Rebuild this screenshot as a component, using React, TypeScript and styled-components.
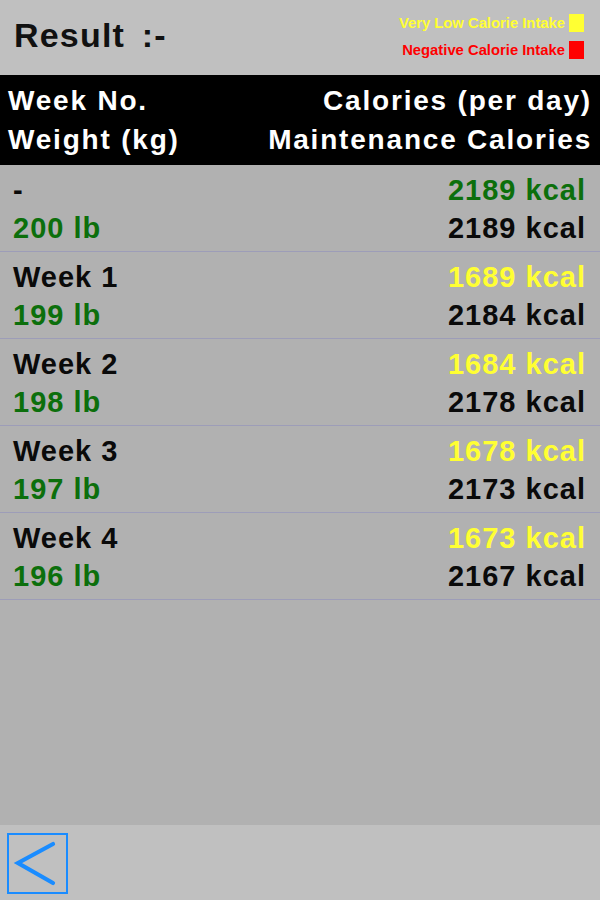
import React from "react";
import styled, { createGlobalStyle } from "styled-components";

const GlobalStyle = createGlobalStyle`
  html, body {
    margin: 0;
    padding: 0;
    height: 100%;
  }
  #root {
    height: 100%;
  }
  body {
    font-family: "Liberation Sans", Arial, Helvetica, sans-serif;
  }
`;

const Screen = styled.div`
  display: flex;
  flex-direction: column;
  width: 600px;
  height: 900px;
  background: #b1b1b1;
`;

const TopBar = styled.header`
  display: flex;
  align-items: center;
  justify-content: space-between;
  height: 75px;
  padding: 0 16px 0 14px;
  box-sizing: border-box;
  background: #c0c0c0;
`;

const Title = styled.h1`
  margin: 0;
  font-size: 34px;
  font-weight: bold;
  color: #111;
  letter-spacing: 1.2px;
  word-spacing: 6px;
  padding-bottom: 4px;
`;

const Legend = styled.div`
  display: flex;
  flex-direction: column;
  align-items: flex-end;
  gap: 9px;
  padding-bottom: 2px;
`;

const LegendItem = styled.div<{ $color: string }>`
  display: flex;
  align-items: center;
  gap: 4px;
  font-size: 14.8px;
  font-weight: bold;
  color: ${(p) => p.$color};
`;

const Swatch = styled.span<{ $color: string }>`
  display: block;
  width: 15px;
  height: 18px;
  background: ${(p) => p.$color};
`;

const TableHead = styled.div`
  display: grid;
  grid-template-columns: auto auto;
  justify-content: space-between;
  padding: 6px 8px 6px 8px;
  background: #000;
  color: #fff;
  font-size: 28px;
  font-weight: bold;
  letter-spacing: 1.8px;
  line-height: 39px;
`;

const HeadCell = styled.div<{ $right?: boolean }>`
  text-align: ${(p) => (p.$right ? "right" : "left")};
`;

const List = styled.div`
  flex: 1;
  background: #b1b1b1;
`;

const Row = styled.div`
  display: grid;
  grid-template-columns: 1fr 1fr;
  padding: 6px 14px 4px 13px;
  border-bottom: 1px solid #9d9db8;
  font-size: 29px;
  font-weight: bold;
  letter-spacing: 1px;
  line-height: 38px;
`;

const Cell = styled.div<{ $color: string; $right?: boolean }>`
  color: ${(p) => p.$color};
  text-align: ${(p) => (p.$right ? "right" : "left")};
`;

const BottomBar = styled.footer`
  display: flex;
  align-items: center;
  height: 75px;
  padding: 0 7px;
  background: #c0c0c0;
`;

const BackButton = styled.button`
  display: flex;
  align-items: center;
  justify-content: center;
  box-sizing: border-box;
  width: 61px;
  height: 61px;
  margin-top: 2px;
  padding: 0;
  border: 2px solid #1a8cff;
  background: transparent;
  cursor: pointer;
`;

const GREEN = "#0c6f0c";
const YELLOW = "#ffff33";
const BLACK = "#0a0a0a";

type Entry = {
  week: string;
  weight: string;
  calories: string;
  maintenance: string;
  level: "ok" | "low";
};

const entries: Entry[] = [
  { week: "-", weight: "200 lb", calories: "2189 kcal", maintenance: "2189 kcal", level: "ok" },
  { week: "Week 1", weight: "199 lb", calories: "1689 kcal", maintenance: "2184 kcal", level: "low" },
  { week: "Week 2", weight: "198 lb", calories: "1684 kcal", maintenance: "2178 kcal", level: "low" },
  { week: "Week 3", weight: "197 lb", calories: "1678 kcal", maintenance: "2173 kcal", level: "low" },
  { week: "Week 4", weight: "196 lb", calories: "1673 kcal", maintenance: "2167 kcal", level: "low" },
];

function App() {
  return (
    <>
      <GlobalStyle />
      <Screen>
        <TopBar>
          <Title>Result :-</Title>
          <Legend>
            <LegendItem $color="#ffff33">
              Very Low Calorie Intake
              <Swatch $color="#ffff33" />
            </LegendItem>
            <LegendItem $color="#ff0000">
              Negative Calorie Intake
              <Swatch $color="#ff0000" />
            </LegendItem>
          </Legend>
        </TopBar>

        <TableHead>
          <HeadCell>Week No.</HeadCell>
          <HeadCell $right>Calories (per day)</HeadCell>
          <HeadCell>Weight (kg)</HeadCell>
          <HeadCell $right>Maintenance Calories</HeadCell>
        </TableHead>

        <List>
          {entries.map((e) => (
            <Row key={e.week}>
              <Cell $color={BLACK}>{e.week}</Cell>
              <Cell $color={e.level === "low" ? YELLOW : GREEN} $right>
                {e.calories}
              </Cell>
              <Cell $color={GREEN}>{e.weight}</Cell>
              <Cell $color={BLACK} $right>
                {e.maintenance}
              </Cell>
            </Row>
          ))}
        </List>

        <BottomBar>
          <BackButton aria-label="Back">
            <svg width="57" height="57" viewBox="0 0 57 57">
              <path
                d="M44 9 L9 28 L44 48"
                fill="none"
                stroke="#1a8cff"
                strokeWidth="4.2"
                strokeLinecap="round"
                strokeLinejoin="miter"
              />
            </svg>
          </BackButton>
        </BottomBar>
      </Screen>
    </>
  );
}

export default App;
